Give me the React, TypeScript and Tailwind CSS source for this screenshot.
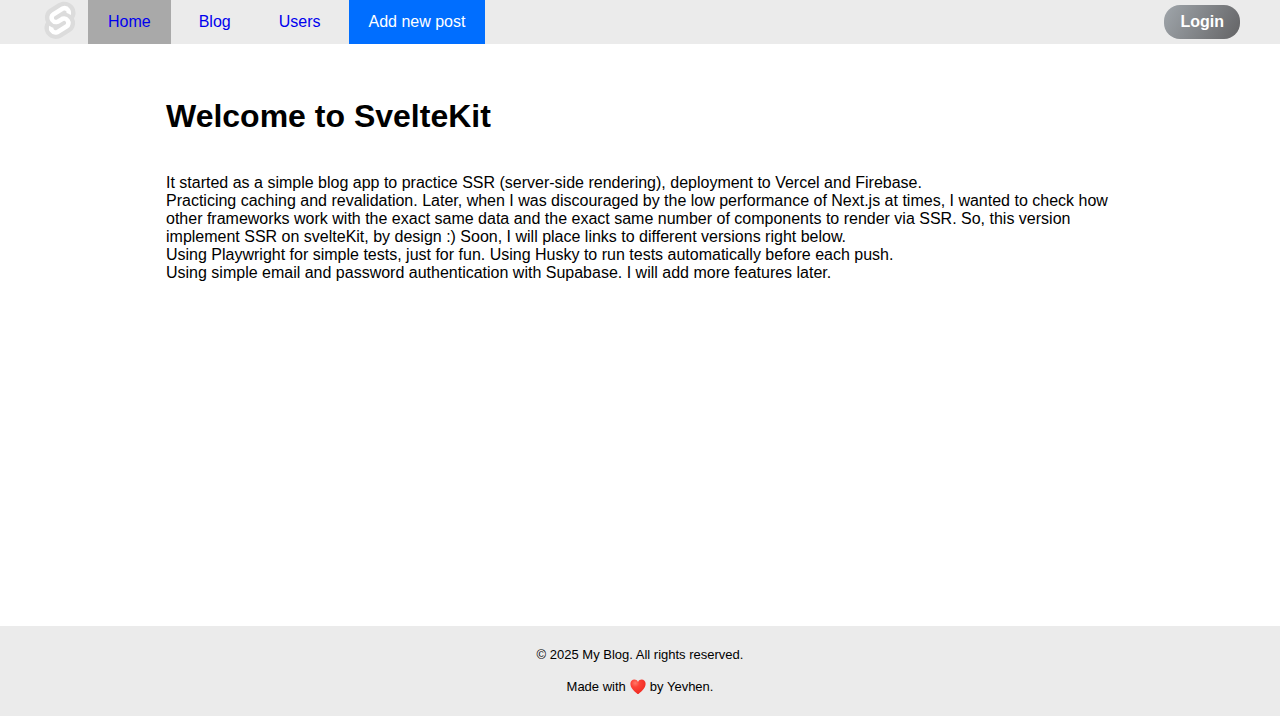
const links = [
  { label: "Home", className: "bg-[#a9a9a9] text-[#0000ee]" },
  { label: "Blog", className: "text-[#0000ee]" },
  { label: "Users", className: "text-[#0000ee]" },
  { label: "Add new post", className: "bg-[#006eff] text-white" },
];

function Logo() {
  return (
    <svg viewBox="-6.5 3 120 120" className="h-10 w-10" aria-hidden="true">
      <path
        fill="#dcdcdc"
        d="M94.1566,22.8189c-10.4-14.8851-30.94-19.2971-45.7914-9.8348L22.2825,29.6078A29.9234,29.9234,0,0,0,8.7639,49.6506a31.5136,31.5136,0,0,0,3.1076,20.2318A30.0061,30.0061,0,0,0,7.3953,81.0653a31.8886,31.8886,0,0,0,5.4473,24.1157c10.4022,14.8865,30.9423,19.2966,45.7914,9.8348L84.7167,98.3921A29.9177,29.9177,0,0,0,98.2353,78.3493,31.5263,31.5263,0,0,0,95.13,58.117a30,30,0,0,0,4.4743-11.1824,31.88,31.88,0,0,0-5.4473-24.1157"
      />
      <path
        fill="#ffffff"
        d="M45.8171,106.5815A20.7182,20.7182,0,0,1,23.58,98.3389a19.1739,19.1739,0,0,1-3.2766-14.5025,18.1886,18.1886,0,0,1,.6233-2.4357l.4912-1.4978,1.3363.9815a33.6443,33.6443,0,0,0,10.203,5.0978l.9694.2941-.0893.9675a5.8474,5.8474,0,0,0,1.052,3.8781,6.2389,6.2389,0,0,0,6.6952,2.485,5.7449,5.7449,0,0,0,1.6021-.7041L69.27,76.281a5.4306,5.4306,0,0,0,2.4506-3.631,5.7948,5.7948,0,0,0-.9875-4.3712,6.2436,6.2436,0,0,0-6.6978-2.4864,5.7427,5.7427,0,0,0-1.6.7036l-9.9532,6.3449a19.0329,19.0329,0,0,1-5.2965,2.3259,20.7181,20.7181,0,0,1-22.2368-8.2427,19.1725,19.1725,0,0,1-3.2766-14.5024,17.9885,17.9885,0,0,1,8.13-12.0513L55.8833,23.7472a19.0038,19.0038,0,0,1,5.3-2.3287A20.7182,20.7182,0,0,1,83.42,29.6611a19.1739,19.1739,0,0,1,3.2766,14.5025,18.4,18.4,0,0,1-.6233,2.4357l-.4912,1.4978-1.3356-.98a33.6175,33.6175,0,0,0-10.2037-5.1l-.9694-.2942.0893-.9675a5.8588,5.8588,0,0,0-1.052-3.878,6.2389,6.2389,0,0,0-6.6952-2.485,5.7449,5.7449,0,0,0-1.6021.7041L37.73,51.719a5.4218,5.4218,0,0,0-2.4487,3.63,5.7862,5.7862,0,0,0,.9856,4.3717,6.2437,6.2437,0,0,0,6.6978,2.4864,5.7652,5.7652,0,0,0,1.602-.7041l9.9519-6.3425a18.978,18.978,0,0,1,5.2959-2.3278,20.7181,20.7181,0,0,1,22.2368,8.2427,19.1725,19.1725,0,0,1,3.2766,14.5024,17.9977,17.9977,0,0,1-8.13,12.0532L51.1167,104.2528a19.0038,19.0038,0,0,1-5.3,2.3287"
      />
    </svg>
  );
}

function Heart() {
  return (
    <svg viewBox="0 0 16 16" className="h-4 w-4" role="img" aria-label="love">
      <defs>
        <radialGradient id="heart-fill" cx="0.32" cy="0.25" r="0.8">
          <stop offset="0" stopColor="#ff7a68" />
          <stop offset="0.35" stopColor="#fd4236" />
          <stop offset="1" stopColor="#ee2a22" />
        </radialGradient>
      </defs>
      <path
        fill="url(#heart-fill)"
        d="M8 2.9C7.2 1.3 5.9.5 4.4.5 2.1.5.4 2.3.4 4.800c0 4 3.500 7.400 7.100 10.100.3.2.7.2 1 0 3.600-2.700 7.100-6.100 7.100-10.100C15.600 2.300 13.900.5 11.600.5 10.100.5 8.800 1.300 8 2.900Z"
      />
    </svg>
  );
}

export default function App() {
  return (
    <div className="flex min-h-screen flex-col bg-white pb-1 font-['Liberation_Sans',Arial,sans-serif] text-base leading-[18px] text-black">
      <header className="flex h-11 items-center justify-between bg-[#ebebeb] px-10">
        <nav className="flex h-full gap-2" aria-label="Main">
          <a href="#" aria-label="SvelteKit">
            <Logo />
          </a>
          {links.map((link) => (
            <a key={link.label} href="#" className={`flex items-center px-5 ${link.className}`}>
              {link.label}
            </a>
          ))}
        </nav>
        <button
          type="button"
          className="rounded-2xl bg-[linear-gradient(120deg,#a0a6ab,#636365)] px-4 py-2 font-bold text-white"
        >
          Login
        </button>
      </header>

      <main className="mx-auto w-full max-w-[948px] grow pt-[54px]">
        <h1 className="mb-10 text-[32px] leading-9 font-bold">Welcome to SvelteKit</h1>
        <p>
          It started as a simple blog app to practice SSR (server-side rendering), deployment to
          Vercel and Firebase.
        </p>
        <p>
          Practicing caching and revalidation. Later, when I was discouraged by the low performance
          of Next.js at times, I wanted to check how other frameworks work with the exact same data
          and the exact same number of components to render via SSR. So, this version implement SSR
          on svelteKit, by design :) Soon, I will place links to different versions right below.
        </p>
        <p>
          Using Playwright for simple tests, just for fun. Using Husky to run tests automatically
          before each push.
        </p>
        <p>
          Using simple email and password authentication with Supabase. I will add more features
          later.
        </p>
      </main>

      <footer className="flex flex-col items-center gap-4 bg-[#ebebeb] py-[21px] text-[13px] leading-4">
        <p>© 2025 My Blog. All rights reserved.</p>
        <p className="flex items-center gap-1">
          <span>Made with</span>
          <Heart />
          <span>by Yevhen.</span>
        </p>
      </footer>
    </div>
  );
}
